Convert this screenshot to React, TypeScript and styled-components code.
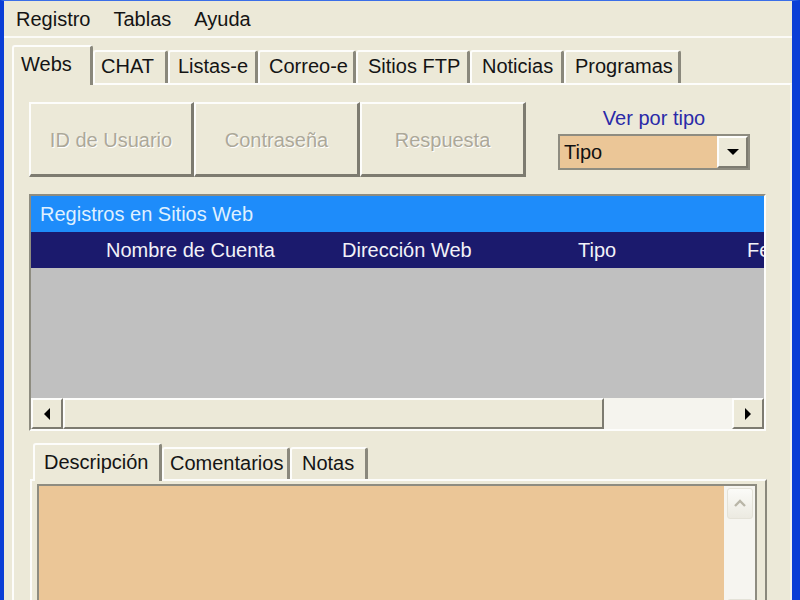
import React from "react";
import styled, { createGlobalStyle } from "styled-components";

const GlobalStyle = createGlobalStyle`
  html, body {
    margin: 0;
    padding: 0;
    background: #ece9d8;
  }
  body {
    font-family: "Liberation Sans", Arial, sans-serif;
  }
`;

const Window = styled.div`
  width: 800px;
  height: 600px;
  box-sizing: border-box;
  background: #ece9d8;
  border-top: 1px solid #3a6ee8;
  border-left: 4px solid #0a3ed6;
  border-right: 8px solid #0a3ed6;
  display: flex;
  flex-direction: column;
  overflow: hidden;
  font-size: 20px;
  color: #141414;
`;

const MenuBar = styled.div`
  height: 35px;
  display: flex;
  align-items: center;
  gap: 23px;
  padding-left: 12px;
  border-bottom: 2px solid #fbfaf6;
`;

const MenuItem = styled.span`
  line-height: 24px;
`;

const TabStrip = styled.div<{ $height: number; $inset: number }>`
  height: ${(p) => p.$height}px;
  display: flex;
  align-items: flex-end;
  padding-left: ${(p) => p.$inset}px;
  flex-shrink: 0;
`;

const Tab = styled.div<{ $active?: boolean; $h: number; $w: number; $indent: number }>`
  box-sizing: border-box;
  width: ${(p) => p.$w}px;
  height: ${(p) => p.$h}px;
  padding: ${(p) => (p.$active ? 5 : 2)}px 0 0 ${(p) => p.$indent}px;
  border-top: 2px solid #fdfdfb;
  border-left: 2px solid #fdfdfb;
  border-right: 3px solid #8a887c;
  border-radius: 3px 3px 0 0;
  white-space: nowrap;
  overflow: hidden;
  line-height: 24px;
  background: #ece9d8;
  position: relative;
  z-index: ${(p) => (p.$active ? 2 : 1)};
  margin-bottom: ${(p) => (p.$active ? "-2px" : "0")};
`;

const Panel = styled.div`
  flex: 1;
  margin: 0 0 0 8px;
  border-top: 2px solid #fdfdfb;
  border-left: 2px solid #fdfdfb;
  border-right: 2px solid #f4f3ec;
  padding: 16px 23px 0 15px;
  display: flex;
  flex-direction: column;
  min-height: 0;
`;

const TopRow = styled.div`
  display: flex;
  align-items: flex-start;
  height: 76px;
  padding-top: 1px;
  box-sizing: border-box;
`;

const ActionButton = styled.button<{ $width: number }>`
  width: ${(p) => p.$width}px;
  height: 75px;
  box-sizing: border-box;
  background: #ece9d8;
  border-top: 2px solid #fdfdfb;
  border-left: 2px solid #fdfdfb;
  border-right: 3px solid #7d7b70;
  border-bottom: 3px solid #7d7b70;
  font-family: inherit;
  font-size: 20px;
  color: #aca899;
  text-shadow: 1px 1px 0 #ffffff;
  padding: 2px 0 0;
`;

const FilterGroup = styled.div`
  margin-left: 32px;
  width: 192px;
  display: flex;
  flex-direction: column;
  align-items: center;
`;

const FilterLabel = styled.span`
  color: #2a2aa8;
  line-height: 24px;
  margin-top: 4px;
`;

const Combo = styled.div`
  margin-top: 4px;
  width: 192px;
  height: 36px;
  box-sizing: border-box;
  border: 2px solid #8e8c80;
  background: #ebc697;
  display: flex;
  align-items: center;
`;

const ComboText = styled.span`
  flex: 1;
  padding-left: 4px;
  color: #111;
`;

const ArrowButton = styled.div<{ $flat?: boolean }>`
  width: ${(p) => (p.$flat ? 32 : 31)}px;
  height: 100%;
  box-sizing: border-box;
  background: #ece9d8;
  border-top: 2px solid #fdfdfb;
  border-left: 2px solid #fdfdfb;
  border-right: 2px solid #7d7b70;
  border-bottom: 2px solid #7d7b70;
  display: flex;
  align-items: center;
  justify-content: center;
  flex-shrink: 0;
`;

const ListBox = styled.div`
  margin-top: 17px;
  width: 737px;
  height: 237px;
  box-sizing: border-box;
  border-top: 2px solid #8e8c80;
  border-left: 2px solid #8e8c80;
  border-bottom: 2px solid #fdfdfb;
  border-right: 2px solid #fdfdfb;
  display: flex;
  flex-direction: column;
  overflow: hidden;
`;

const Caption = styled.div`
  height: 36px;
  background: #1e8cfa;
  color: #dff0ff;
  padding-left: 9px;
  display: flex;
  align-items: center;
  white-space: nowrap;
`;

const HeaderRow = styled.div`
  height: 36px;
  background: #1b1a6d;
  color: #f2f2f8;
  display: grid;
  grid-template-columns: 236px 236px 169px 200px;
  padding-left: 75px;
  align-items: center;
  white-space: nowrap;
  overflow: hidden;
`;

const ListBody = styled.div`
  flex: 1;
  background: #c0c0c0;
`;

const HScroll = styled.div`
  height: 31px;
  display: flex;
  background: #f5f4ee;
`;

const Thumb = styled.div`
  width: 541px;
  box-sizing: border-box;
  background: #ece9d8;
  border-top: 2px solid #fdfdfb;
  border-left: 2px solid #fdfdfb;
  border-right: 2px solid #7d7b70;
  border-bottom: 2px solid #7d7b70;
`;

const Track = styled.div`
  flex: 1;
  background: #f5f4ee;
`;

const DetailPanel = styled.div`
  flex: 1;
  margin-left: 1px;
  width: 737px;
  box-sizing: border-box;
  border-top: 2px solid #fdfdfb;
  border-left: 2px solid #fdfdfb;
  border-right: 2px solid #8a887c;
  padding: 3px 8px 0 5px;
  min-height: 0;
  overflow: hidden;
`;

const TextBox = styled.div`
  height: 150px;
  box-sizing: border-box;
  border: 2px solid #8e8c80;
  background: #ebc697;
  display: flex;
  justify-content: flex-end;
`;

const VScroll = styled.div`
  width: 31px;
  background: #f6f5f0;
  display: flex;
  flex-direction: column;
  align-items: center;
  justify-content: space-between;
  padding: 2px 0;
`;

const ThemedArrow = styled.div`
  width: 26px;
  height: 31px;
  box-sizing: border-box;
  border: 1px solid #e4e2d8;
  border-radius: 3px;
  background: linear-gradient(#fbfbf8, #eceae1);
  display: flex;
  align-items: center;
  justify-content: center;
`;

const Triangle = ({ dir }: { dir: "down" | "left" | "right" }) => {
  const pts =
    dir === "down" ? "0,0 12,0 6,6" : dir === "left" ? "7,0 7,12 1,6" : "1,0 1,12 7,6";
  const size = dir === "down" ? { w: 12, h: 6 } : { w: 8, h: 12 };
  return (
    <svg width={size.w} height={size.h} viewBox={`0 0 ${size.w} ${size.h}`}>
      <polygon points={pts} fill="#000" />
    </svg>
  );
};

const Chevron = ({ up }: { up?: boolean }) => (
  <svg width="14" height="9" viewBox="0 0 14 9">
    <polyline
      points={up ? "2,7 7,2 12,7" : "2,2 7,7 12,2"}
      fill="none"
      stroke="#b9b6a8"
      strokeWidth="2.4"
    />
  </svg>
);

const mainTabs = [
  { label: "Webs", w: 81, indent: 7 },
  { label: "CHAT", w: 75, indent: 6 },
  { label: "Listas-e", w: 90, indent: 8 },
  { label: "Correo-e", w: 98, indent: 9 },
  { label: "Sitios FTP", w: 114, indent: 10 },
  { label: "Noticias", w: 94, indent: 10 },
  { label: "Programas", w: 117, indent: 9 },
];
const detailTabs = [
  { label: "Descripción", w: 129, indent: 9 },
  { label: "Comentarios", w: 128, indent: 6 },
  { label: "Notas", w: 78, indent: 10 },
];
const columns = ["Nombre de Cuenta", "Dirección Web", "Tipo", "Fecha"];

export default function App() {
  return (
    <>
      <GlobalStyle />
      <Window>
        <MenuBar>
          <MenuItem>Registro</MenuItem>
          <MenuItem>Tablas</MenuItem>
          <MenuItem>Ayuda</MenuItem>
        </MenuBar>

        <TabStrip $height={45} $inset={8}>
          {mainTabs.map((t, i) => (
            <Tab key={t.label} $active={i === 0} $h={i === 0 ? 40 : 33} $w={t.w} $indent={t.indent}>
              {t.label}
            </Tab>
          ))}
        </TabStrip>

        <Panel>
          <TopRow>
            <ActionButton $width={165} disabled>
              ID de Usuario
            </ActionButton>
            <ActionButton $width={166} disabled>
              Contraseña
            </ActionButton>
            <ActionButton $width={166} disabled>
              Respuesta
            </ActionButton>
            <FilterGroup>
              <FilterLabel>Ver por tipo</FilterLabel>
              <Combo>
                <ComboText>Tipo</ComboText>
                <ArrowButton>
                  <Triangle dir="down" />
                </ArrowButton>
              </Combo>
            </FilterGroup>
          </TopRow>

          <ListBox>
            <Caption>Registros en Sitios Web</Caption>
            <HeaderRow>
              {columns.map((c) => (
                <span key={c}>{c}</span>
              ))}
            </HeaderRow>
            <ListBody />
            <HScroll>
              <ArrowButton $flat>
                <Triangle dir="left" />
              </ArrowButton>
              <Thumb />
              <Track />
              <ArrowButton $flat>
                <Triangle dir="right" />
              </ArrowButton>
            </HScroll>
          </ListBox>

          <TabStrip $height={48} $inset={4}>
            {detailTabs.map((t, i) => (
              <Tab key={t.label} $active={i === 0} $h={i === 0 ? 38 : 32} $w={t.w} $indent={t.indent}>
                {t.label}
              </Tab>
            ))}
          </TabStrip>

          <DetailPanel>
            <TextBox>
              <VScroll>
                <ThemedArrow>
                  <Chevron up />
                </ThemedArrow>
                <ThemedArrow>
                  <Chevron />
                </ThemedArrow>
              </VScroll>
            </TextBox>
          </DetailPanel>
        </Panel>
      </Window>
    </>
  );
}
